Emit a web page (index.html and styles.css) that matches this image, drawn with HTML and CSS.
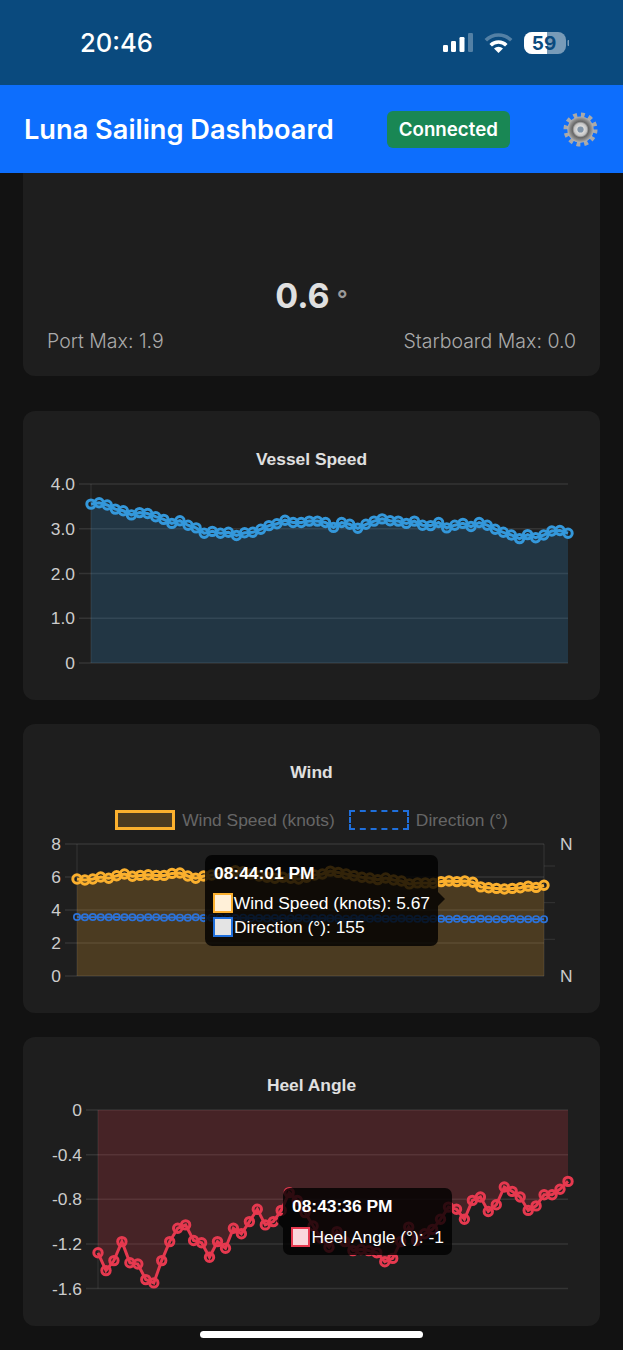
FILE: index.html
```html
<!DOCTYPE html>
<html lang="en">
<head>
    <meta charset="UTF-8">
    <meta name="viewport" content="width=device-width, initial-scale=1.0">
    <title>Luna Sailing Dashboard</title>
    <link rel="stylesheet" href="styles.css">
</head>
<body>
    <div class="status-bar">
        <span class="clock">20:46</span>
        <svg class="status-icons" width="127" height="24" viewBox="0 0 127 24">
            <defs>
                <clipPath id="batteryLevel"><rect x="82" y="1" width="23" height="22"/></clipPath>
            </defs>
            <rect x="1" y="14" width="5" height="7" rx="1.2" fill="#fff"/>
            <rect x="9" y="10" width="5" height="11" rx="1.2" fill="#fff"/>
            <rect x="17.500" y="6" width="5" height="15" rx="1.2" fill="#fff"/>
            <rect x="26" y="2" width="5" height="19" rx="1.2" fill="#fff" opacity="0.3"/>
            <path d="M43.800 9.300A18 18 0 0 1 69.200 9.300" fill="none" stroke="#fff" stroke-width="3.500" opacity="0.3"/>
            <path d="M48.700 14.200A11 11 0 0 1 64.300 14.200" fill="none" stroke="#fff" stroke-width="3.500"/>
            <path d="M56.500 22L52 17.500A6.400 6.400 0 0 1 61 17.500Z" fill="#fff"/>
            <rect x="82" y="1" width="42" height="22" rx="8" fill="#fff" opacity="0.45"/>
            <rect x="82" y="1" width="42" height="22" rx="8" fill="#fff" clip-path="url(#batteryLevel)"/>
            <rect x="125.500" y="9" width="2" height="6" rx="1" fill="#fff" opacity="0.45"/>
            <text class="battery-text" x="102" y="18.500" text-anchor="middle">59</text>
        </svg>
    </div>

    <header class="app-header">
        <h1>Luna Sailing Dashboard</h1>
        <span class="badge">Connected</span>
        <svg class="gear" width="35" height="35" viewBox="0 0 36 36">
            <defs>
                <radialGradient id="gearBody">
                    <stop offset="0.3" stop-color="#d8d8d8"/>
                    <stop offset="0.48" stop-color="#c4c4c4"/>
                    <stop offset="0.62" stop-color="#666"/>
                    <stop offset="0.82" stop-color="#8c8c8c"/>
                    <stop offset="1" stop-color="#b4b4b4"/>
                </radialGradient>
            </defs>
            <circle cx="18" cy="18" r="15" fill="none" stroke="#a9a9a9" stroke-width="5" stroke-dasharray="3.900 3.954"/>
            <circle cx="18" cy="18" r="13.500" fill="url(#gearBody)"/>
            <circle cx="18" cy="18" r="3.200" fill="#7f93a8"/>
        </svg>
    </header>

    <main class="dashboard">
        <section class="card card-cut">
            <div class="heel-value">0.6<span class="heel-unit">°</span></div>
            <div class="heel-max">
                <span>Port Max: 1.9</span>
                <span>Starboard Max: 0.0</span>
            </div>
        </section>

        <section class="card">
            <h3>Vessel Speed</h3>
            <div class="chart" id="speedChart"></div>
        </section>

        <section class="card">
            <h3>Wind</h3>
            <div class="legend">
                <span class="legend-item"><i class="swatch swatch-wind"></i>Wind Speed (knots)</span>
                <span class="legend-item"><i class="swatch swatch-dir"></i>Direction (°)</span>
            </div>
            <div class="chart" id="windChart">
                <div class="tooltip tooltip-wind">
                    <div class="tooltip-title">08:44:01 PM</div>
                    <div class="tooltip-row"><i class="key key-wind"></i>Wind Speed (knots): 5.67</div>
                    <div class="tooltip-row"><i class="key key-dir"></i>Direction (°): 155</div>
                </div>
            </div>
        </section>

        <section class="card">
            <h3>Heel Angle</h3>
            <div class="chart" id="heelChart">
                <div class="tooltip tooltip-heel">
                    <div class="tooltip-title">08:43:36 PM</div>
                    <div class="tooltip-row"><i class="key key-heel"></i>Heel Angle (°): -1</div>
                </div>
            </div>
        </section>
    </main>

    <div class="home-bar"></div>

    <script src="charts.js"></script>
</body>
</html>
```

FILE: styles.css
```css
html, body {
    margin: 0;
    height: 100%;
}
body {
    position: relative;
    height: 1350px;
    overflow: hidden;
    background-color: #121212;
    color: #e0e0e0;
    font-family: Inter, "Noto Sans", sans-serif;
}
.status-bar {
    height: 85px;
    display: flex;
    align-items: center;
    justify-content: space-between;
    padding: 0 54px 0 80px;
    background-color: #0a4a7e;
    color: #fff;
}
.clock {
    font-size: 25.600px;
    font-weight: 500;
}
.status-icons {
    display: block;
}
.battery-text {
    font-family: Inter, sans-serif;
    font-size: 19px;
    font-weight: 700;
    fill: #0a4a7e;
}
.app-header {
    height: 88px;
    display: flex;
    align-items: center;
    justify-content: space-between;
    padding: 0 25px 0 24px;
    background-color: #0d6efd;
}
.app-header h1 {
    margin: 0;
    font-size: 27.200px;
    font-weight: 600;
    color: #fff;
}
.badge {
    padding: 8px 12px;
    border-radius: 6px;
    background-color: #198754;
    color: #fff;
    font-size: 18.700px;
    line-height: 21px;
    font-weight: 600;
}
.gear {
    display: block;
}
.dashboard {
    display: flex;
    flex-direction: column;
    gap: 24px;
    padding: 0 23px;
}
.card {
    padding: 38px 0 24px;
    border-radius: 12px;
    background-color: #1e1e1e;
}
.card h3 {
    margin: 0 0 -1px;
    font-family: "Liberation Sans", Arial, sans-serif;
    font-size: 17.400px;
    line-height: 20px;
    font-weight: 700;
    text-align: center;
}
.card-cut {
    height: 203px;
    box-sizing: border-box;
    margin-bottom: 11px;
    padding: 100px 24px 0;
    border-radius: 0 0 12px 12px;
}
.heel-value {
    height: 46px;
    text-align: center;
    font-size: 34px;
    line-height: 46px;
    font-weight: 700;
}
.heel-unit {
    margin-left: 7px;
    font-size: 24px;
    font-weight: 600;
    color: #999;
}
.heel-max {
    display: flex;
    justify-content: space-between;
    margin-top: 10px;
    font-size: 19.500px;
    line-height: 24px;
    font-weight: 300;
    color: #aaa;
}
.legend {
    display: flex;
    justify-content: center;
    gap: 14px;
    margin: 29px 0 -2px;
    height: 20px;
    font-family: "Liberation Sans", Arial, sans-serif;
    font-size: 17.400px;
    line-height: 20px;
    color: #666;
}
.legend-item {
    display: flex;
    align-items: center;
    gap: 7px;
}
.swatch {
    box-sizing: border-box;
    width: 60px;
    height: 20px;
}
.swatch-wind {
    border: 3px solid #fbb02e;
    background-color: #4b3b21;
}
.swatch-dir {
    border: 2px dashed #1f6fdc;
}
.chart {
    position: relative;
}
.chart svg {
    display: block;
}
.axis-label {
    font-family: "Liberation Sans", Arial, sans-serif;
    font-size: 17.400px;
    fill: #ccc;
}
.tooltip {
    position: absolute;
    box-sizing: border-box;
    padding: 6px 8px;
    border-radius: 7px;
    background-color: rgba(0, 0, 0, 0.8);
    color: #fff;
    font-family: "Liberation Sans", Arial, sans-serif;
    font-size: 17.400px;
    line-height: 24px;
    white-space: nowrap;
}
.tooltip::after {
    content: "";
    position: absolute;
    border: 7px solid transparent;
}
.tooltip-wind {
    left: 182px;
    top: 27px;
    width: 233px;
    height: 91px;
}
.tooltip-wind::after {
    left: 100%;
    top: 37px;
    border-left-color: rgba(0, 0, 0, 0.8);
}
.tooltip-heel {
    left: 260px;
    top: 94px;
    width: 169px;
    height: 67px;
}
.tooltip-heel::after {
    right: 100%;
    top: 26px;
    border-right-color: rgba(0, 0, 0, 0.8);
}
.tooltip-title {
    height: 26px;
    padding-left: 1px;
    font-weight: 700;
}
.tooltip-wind .tooltip-title {
    margin-bottom: 4px;
}
.tooltip-heel .tooltip-title {
    margin-bottom: 5px;
}
.tooltip-row {
    display: flex;
    align-items: center;
    gap: 1px;
    height: 24px;
}
.key {
    box-sizing: border-box;
    width: 20px;
    height: 20px;
    border: 2.500px solid;
}
.key-wind {
    border-color: #fbb02e;
    background-color: #fff0d8;
}
.key-dir {
    border-color: #1f6fdc;
    background-color: #e4e4e4;
}
.key-heel {
    border-color: #e6394f;
    background-color: #fad7dc;
}
.home-bar {
    position: absolute;
    left: 200px;
    bottom: 12px;
    width: 223px;
    height: 7px;
    border-radius: 4px;
    background-color: #fff;
}
```

FILE: charts.js
```js
var speed = [3.55, 3.58, 3.53, 3.44, 3.40, 3.31, 3.36, 3.34, 3.27, 3.21, 3.12, 3.18, 3.08, 3.02, 2.90, 2.94, 2.90, 2.92, 2.85, 2.91,
    2.92, 2.99, 3.07, 3.11, 3.19, 3.14, 3.14, 3.17, 3.17, 3.14, 3.03, 3.14, 3.10, 3.01, 3.10, 3.17, 3.22, 3.18, 3.17, 3.12,
    3.17, 3.08, 3.07, 3.14, 3.02, 3.08, 3.12, 3.05, 3.14, 3.08, 2.99, 2.92, 2.86, 2.78, 2.87, 2.80, 2.86, 2.95, 2.96, 2.90];

var wind = [5.88, 5.82, 5.88, 6.00, 5.92, 6.08, 6.18, 6.04, 6.10, 6.14, 6.10, 6.10, 6.22, 6.24, 6.06, 5.92, 6.06, 6.12, 6.18, 6.26,
    6.38, 6.32, 6.18, 6.06, 5.98, 5.92, 5.98, 5.92, 5.88, 5.98, 6.12, 6.18, 6.36, 6.28, 6.18, 6.08, 5.98, 5.94, 5.84, 5.94,
    5.82, 5.76, 5.58, 5.64, 5.64, 5.62, 5.72, 5.76, 5.72, 5.76, 5.68, 5.40, 5.35, 5.31, 5.27, 5.31, 5.35, 5.45, 5.37, 5.50];

var direction = [161, 160, 161, 160, 160, 161, 160, 160, 159, 160, 160, 159, 160, 159, 159, 160, 158, 159, 159, 158,
    158, 159, 158, 158, 157, 158, 158, 157, 158, 157, 157, 158, 157, 157, 156, 157, 157, 156, 157, 156,
    156, 157, 156, 156, 155, 156, 156, 155, 156, 155, 155, 156, 155, 155, 155, 156, 155, 155, 155, 155];

var heel = [-1.28, -1.44, -1.35, -1.18, -1.37, -1.38, -1.52, -1.55, -1.35, -1.18, -1.06, -1.03, -1.17, -1.19, -1.32, -1.18, -1.24, -1.06, -1.11, -1.00,
    -0.89, -1.03, -1.00, -0.90, -0.74, -0.81, -0.92, -1.04, -1.15, -1.23, -1.09, -1.18, -1.26, -1.25, -1.26, -1.28, -1.36, -1.33, -1.18, -1.05,
    -1.17, -1.11, -1.07, -0.98, -0.87, -0.89, -0.98, -0.81, -0.78, -0.91, -0.85, -0.69, -0.73, -0.78, -0.90, -0.86, -0.76, -0.76, -0.71, -0.64];

var GRID = "rgba(255,255,255,0.1)";

function seriesSvg(values, c, set) {
    var step = (c.right - c.left) / (values.length - 1);
    var points = values.map(function (v, i) {
        var scale = set.axis === "right" ? c.rightScale : c;
        var y = scale.y0 + (v - scale.v0) * (scale.y1 - scale.y0) / (scale.v1 - scale.v0);
        return [c.left + i * step, y];
    });
    var line = points.map(function (p) { return p[0].toFixed(1) + "," + p[1].toFixed(1); }).join(" ");
    var out = "";
    if (set.fill) {
        var base = c.baseY.toFixed(1);
        out += '<polygon fill="' + set.fill + '" points="' + c.left + ',' + base + ' ' + line + ' ' + c.right + ',' + base + '"/>';
    }
    out += '<polyline fill="none" stroke="' + set.color + '" stroke-width="' + set.width + '" points="' + line + '"/>';
    points.forEach(function (p) {
        out += '<circle cx="' + p[0].toFixed(1) + '" cy="' + p[1].toFixed(1) + '" r="' + set.r + '" fill="none" stroke="' + set.color + '" stroke-width="' + set.width + '"/>';
    });
    return out;
}

function drawChart(id, c) {
    var out = '<svg width="577" height="' + c.height + '" viewBox="0 0 577 ' + c.height + '">';
    var tickX = c.left - 12;

    out += '<line x1="' + c.left + '" x2="' + c.left + '" y1="' + Math.min(c.y0, c.y1) + '" y2="' + Math.max(c.y0, c.y1) + '" stroke="' + GRID + '"/>';
    c.ticks.forEach(function (t) {
        var y = c.y0 + (t.v - c.v0) * (c.y1 - c.y0) / (c.v1 - c.v0);
        out += '<line x1="' + tickX + '" x2="' + c.right + '" y1="' + y + '" y2="' + y + '" stroke="' + GRID + '" stroke-width="1.5"/>';
        out += '<text class="axis-label" text-anchor="end" x="' + (tickX - 4) + '" y="' + (y + 6) + '">' + t.label + '</text>';
    });
    if (c.rightTicks) {
        out += '<line x1="' + c.right + '" x2="' + c.right + '" y1="' + c.y1 + '" y2="' + c.y0 + '" stroke="' + GRID + '"/>';
        c.rightTicks.forEach(function (y) {
            out += '<line x1="' + c.right + '" x2="' + (c.right + 11) + '" y1="' + y + '" y2="' + y + '" stroke="' + GRID + '"/>';
        });
        [c.y1, c.y0].forEach(function (y) {
            out += '<text class="axis-label" x="' + (c.right + 16) + '" y="' + (y + 6) + '">N</text>';
        });
    }
    c.sets.forEach(function (set) {
        out += seriesSvg(set.values, c, set);
    });
    out += "</svg>";

    document.getElementById(id).insertAdjacentHTML("afterbegin", out);
}

// positions below are inside each 577px wide chart box
drawChart("speedChart", {
    height: 208, left: 68, right: 545, y0: 195, y1: 16, v0: 0, v1: 4, baseY: 195,
    ticks: [{ v: 4, label: "4.0" }, { v: 3, label: "3.0" }, { v: 2, label: "2.0" }, { v: 1, label: "1.0" }, { v: 0, label: "0" }],
    sets: [{ values: speed, color: "#3498db", fill: "rgba(52,152,219,0.2)", width: 3, r: 4.2 }]
});

drawChart("windChart", {
    height: 161, left: 54, right: 521, y0: 148, y1: 16, v0: 0, v1: 8, baseY: 148,
    rightScale: { y0: 148, y1: 16, v0: 0, v1: 360 },
    rightTicks: [111.3, 74.7, 38],
    ticks: [{ v: 8, label: "8" }, { v: 6, label: "6" }, { v: 4, label: "4" }, { v: 2, label: "2" }, { v: 0, label: "0" }],
    sets: [
        { values: wind, color: "#fbb02e", fill: "rgba(255,176,46,0.2)", width: 3, r: 4.2 },
        { values: direction, axis: "right", color: "#2c72d8", width: 1.7, r: 3.2 }
    ]
});

drawChart("heelChart", {
    height: 208, left: 75, right: 545, y0: 16, y1: 194.500, v0: 0, v1: -1.6, baseY: 16,
    ticks: [{ v: 0, label: "0" }, { v: -0.4, label: "-0.4" }, { v: -0.8, label: "-0.8" }, { v: -1.2, label: "-1.2" }, { v: -1.6, label: "-1.6" }],
    sets: [{ values: heel, color: "#e6394f", fill: "rgba(230,57,70,0.2)", width: 3, r: 4.2 }]
});
```
